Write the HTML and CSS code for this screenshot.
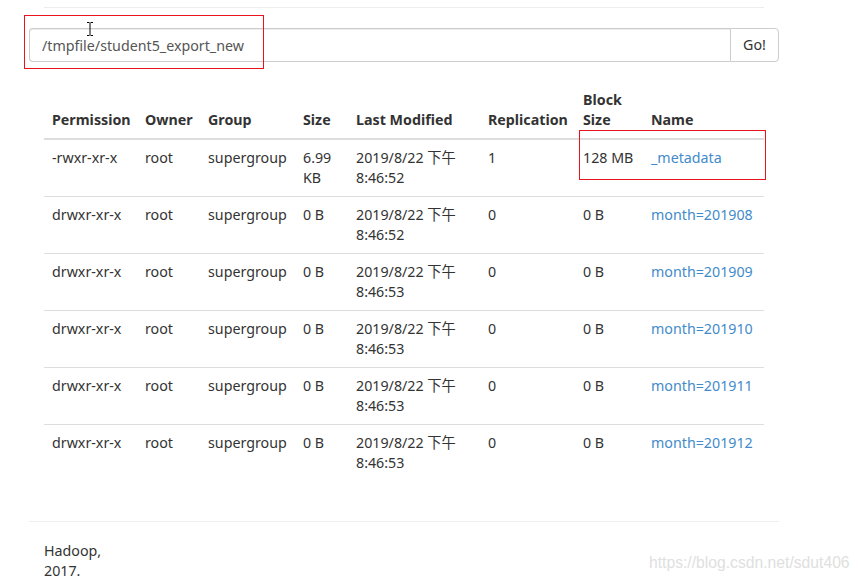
FILE: index.html
```html
<!DOCTYPE html>
<html>
<head>
<meta charset="utf-8">
<link rel="stylesheet" href="styles.css">
</head>
<body>
<div class="container">
  <div class="top-line"></div>
  <div class="input-group">
    <input class="form-control" type="text" value="/tmpfile/student5_export_new">
    <button class="btn">Go!</button>
  </div>
  <div class="content">
    <table class="table">
      <colgroup>
        <col class="c1"><col class="c2"><col class="c3"><col class="c4"><col class="c5"><col class="c6"><col class="c7"><col class="c8">
      </colgroup>
      <thead>
        <tr><th>Permission</th><th>Owner</th><th>Group</th><th>Size</th><th>Last Modified</th><th>Replication</th><th>Block Size</th><th>Name</th></tr>
      </thead>
      <tbody>
        <tr><td>-rwxr-xr-x</td><td>root</td><td>supergroup</td><td>6.99 KB</td><td>2019/8/22 下午 8:46:52</td><td>1</td><td>128 MB</td><td><a href="#">_metadata</a></td></tr>
        <tr><td>drwxr-xr-x</td><td>root</td><td>supergroup</td><td>0 B</td><td>2019/8/22 下午 8:46:52</td><td>0</td><td>0 B</td><td><a href="#">month=201908</a></td></tr>
        <tr><td>drwxr-xr-x</td><td>root</td><td>supergroup</td><td>0 B</td><td>2019/8/22 下午 8:46:53</td><td>0</td><td>0 B</td><td><a href="#">month=201909</a></td></tr>
        <tr><td>drwxr-xr-x</td><td>root</td><td>supergroup</td><td>0 B</td><td>2019/8/22 下午 8:46:53</td><td>0</td><td>0 B</td><td><a href="#">month=201910</a></td></tr>
        <tr><td>drwxr-xr-x</td><td>root</td><td>supergroup</td><td>0 B</td><td>2019/8/22 下午 8:46:53</td><td>0</td><td>0 B</td><td><a href="#">month=201911</a></td></tr>
        <tr><td>drwxr-xr-x</td><td>root</td><td>supergroup</td><td>0 B</td><td>2019/8/22 下午 8:46:53</td><td>0</td><td>0 B</td><td><a href="#">month=201912</a></td></tr>
      </tbody>
    </table>
  </div>
  <hr class="footer-line">
  <div class="footer"><p>Hadoop, 2017.</p></div>
</div>
<div class="mark mark-input"></div>
<div class="mark mark-block"></div>
<svg class="cursor" width="10" height="16" viewBox="0 0 10 16"><path d="M2 1.5h2.5M5.5 1.5h2.5M5 2v12M2 14.5h2.5M5.5 14.5h2.5" stroke="#000" stroke-width="1" fill="none"/></svg>
<div class="watermark">https://blog.csdn.net/sdut406</div>
</body>
</html>
```

FILE: styles.css
```css
html, body {
  margin: 0;
  padding: 0;
  background: #fff;
}
body {
  font-family: "Noto Sans", "Noto Sans CJK SC", sans-serif;
  font-size: 14.25px;
  line-height: 20px;
  color: #333;
}
.container {
  width: 750px;
  margin-left: 29px;
}
.top-line {
  margin: 0 15px;
  height: 7px;
  border-bottom: 1px solid #eee;
}
.input-group {
  display: flex;
  margin-top: 20px;
  height: 34px;
}
.form-control {
  flex: 1;
  box-sizing: border-box;
  height: 34px;
  margin: 0;
  padding: 6px 12px;
  border: 1px solid #ccc;
  border-right: none;
  border-radius: 4px 0 0 4px;
  font: inherit;
  color: #555;
  outline: none;
  box-shadow: inset 0 1px 1px rgba(0,0,0,.075);
}
.btn {
  box-sizing: border-box;
  width: 49px;
  height: 34px;
  margin: 0;
  padding: 6px 0;
  border: 1px solid #ccc;
  border-radius: 0 4px 4px 0;
  background: #fff;
  font: inherit;
  color: #333;
}
.content {
  padding: 0 15px;
  margin-top: 20px;
}
.table {
  width: 720px;
  table-layout: fixed;
  border-collapse: collapse;
  border-spacing: 0;
}
.c1 { width: 93px; }
.c2 { width: 63px; }
.c3 { width: 95px; }
.c4 { width: 53px; }
.c5 { width: 132px; }
.c6 { width: 95px; }
.c7 { width: 68px; }
.c8 { width: 121px; }
.table th, .table td {
  padding: 8px;
  text-align: left;
  line-height: 20px;
}
.table th {
  font-weight: bold;
  vertical-align: bottom;
  border-bottom: 2px solid #ddd;
}
.table td {
  vertical-align: top;
  border-top: 1px solid #ddd;
}
.table tbody tr:first-child td {
  border-top: none;
}
a {
  color: #428bca;
  text-decoration: none;
}
.footer-line {
  margin: 40px 0 0;
  border: 0;
  border-top: 1px solid #eee;
}
.footer {
  padding: 19px 15px 0;
}
.footer p {
  margin: 0;
  width: 60px;
}
.mark {
  position: absolute;
  border: 1px solid #e8141b;
  box-sizing: border-box;
}
.mark-input {
  left: 24px;
  top: 15px;
  width: 240px;
  height: 54px;
}
.mark-block {
  left: 579px;
  top: 130px;
  width: 187px;
  height: 50px;
}
.cursor {
  position: absolute;
  left: 85px;
  top: 21px;
}
.watermark {
  position: absolute;
  left: 649px;
  top: 553px;
  font-family: "Liberation Sans", Arial, sans-serif;
  font-size: 15.7px;
  color: #e0e0e0;
  white-space: nowrap;
}
```
